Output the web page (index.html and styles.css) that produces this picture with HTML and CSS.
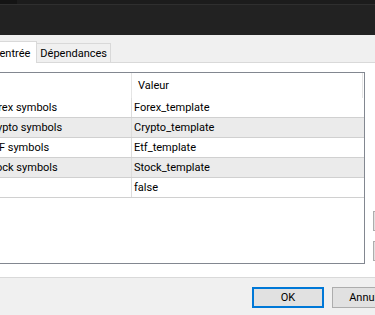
FILE: index.html
```html
<!DOCTYPE html>
<html lang="fr">
<head>
    <meta charset="UTF-8">
    <meta name="viewport" content="width=device-width, initial-scale=1.0">
    <title>Propriétés</title>
    <link rel="stylesheet" href="styles.css">
</head>
<body>
    <div class="titlebar">
        <div class="title-strip"><span class="strip-dark"></span></div>
    </div>
    <div class="tabs">
        <div class="tab-row">
            <div class="tab active">Paramètres d'entrée</div>
            <div class="tab">Dépendances</div>
        </div>
    </div>
    <div class="panel">
        <div class="list">
            <div class="list-head">
                <div class="cell"></div>
                <div class="cell">Valeur</div>
                <div></div>
            </div>
            <div class="row">
                <div class="cell">Forex symbols</div>
                <div class="cell">Forex_template</div>
            </div>
            <div class="row alt">
                <div class="cell">Crypto symbols</div>
                <div class="cell">Crypto_template</div>
            </div>
            <div class="row">
                <div class="cell">ETF symbols</div>
                <div class="cell">Etf_template</div>
            </div>
            <div class="row alt">
                <div class="cell">Stock symbols</div>
                <div class="cell">Stock_template</div>
            </div>
            <div class="row">
                <div class="cell"></div>
                <div class="cell">false</div>
            </div>
        </div>
        <div class="side">
            <button class="side-btn">Charger</button>
            <button class="side-btn">Enregistrer</button>
        </div>
    </div>
    <div class="footer">
        <button class="btn default">OK</button>
        <button class="btn">Annuler</button>
    </div>
</body>
</html>
```

FILE: styles.css
```css
body {
    margin: 0;
    width: 375px;
    height: 315px;
    overflow: hidden;
    background-color: #f0f0f0;
    font-family: Roboto, "Noto Sans", sans-serif;
    font-size: 11px;
    color: #000;
}
.titlebar {
    height: 35px;
    background-color: #222222;
}
.title-strip {
    height: 4px;
    background-color: #1c1c1c;
    border-bottom: 1px solid #2f2f2f;
}
.strip-dark {
    display: block;
    width: 17px;
    height: 4px;
    background-color: #141414;
}
.tabs {
    height: 27px;
    display: flex;
    align-items: flex-end;
}
.tab-row {
    width: 111px;
    display: flex;
    justify-content: flex-end;
    align-items: flex-end;
}
.tab {
    height: 18px;
    line-height: 20px;
    padding: 0 3px;
    background-color: #f0f0f0;
    border: 1px solid #d9d9d9;
    border-bottom: none;
    white-space: nowrap;
}
.tab.active {
    height: 21px;
    line-height: 23px;
    padding: 0 6px;
    background-color: #fff;
    margin-bottom: -1px;
    margin-right: -1px;
    position: relative;
    z-index: 1;
}
.panel {
    height: 205px;
    background-color: #fff;
    border-top: 1px solid #d9d9d9;
    border-bottom: 1px solid #d9d9d9;
    padding-top: 9px;
    display: flex;
    align-items: flex-start;
}
.list {
    flex: none;
    width: 380px;
    height: 190px;
    margin-left: -17px;
    border: 1px solid #828790;
}
.list-head {
    display: grid;
    grid-template-columns: 148px 231px 1fr;
    height: 25px;
}
.list-head .cell {
    border-right: 1px solid #e5e5e5;
    padding-left: 6px;
    line-height: 25px;
    white-space: nowrap;
    overflow: hidden;
}
.row {
    display: grid;
    grid-template-columns: 148px 1fr;
    height: 19px;
    border-bottom: 1px solid #d0d0d0;
}
.row.alt {
    background-color: #ebebeb;
}
.row .cell {
    padding-left: 2px;
    line-height: 19px;
    white-space: nowrap;
    overflow: hidden;
}
.row .cell:first-child {
    border-right: 1px solid #dcdcdc;
}
.side {
    margin-left: 8px;
    display: flex;
    flex-direction: column;
    gap: 10px;
    padding-top: 139px;
}
.side-btn,
.btn {
    font-family: inherit;
    font-size: 11px;
    color: #000;
    background-color: #e1e1e1;
    border: 1px solid #adadad;
    padding: 0;
    margin: 0;
    white-space: nowrap;
}
.side-btn {
    width: 75px;
    height: 20px;
}
.footer {
    display: flex;
    gap: 8px;
    padding: 9px 0 0 252px;
}
.btn {
    flex: none;
    width: 72px;
    height: 21px;
}
.btn.default {
    border: 2px solid #0078d7;
}
```
